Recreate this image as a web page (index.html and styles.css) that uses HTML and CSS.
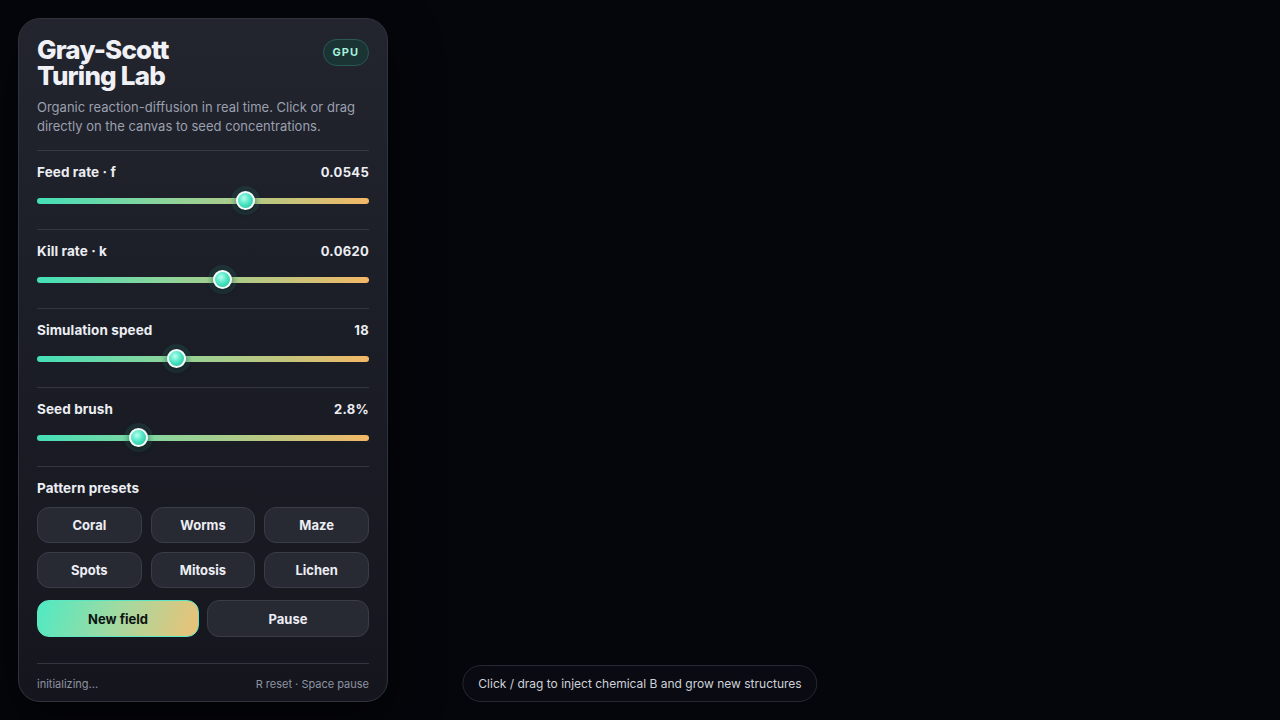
FILE: index.html
```html
<!DOCTYPE html>
<html lang="en">
<head>
  <meta charset="UTF-8">
  <meta name="viewport" content="width=device-width, initial-scale=1.0">
  <title>Gray-Scott Turing Lab</title>
  <link rel="stylesheet" href="styles.css">
</head>
<body>
  <main class="lab">
    <aside class="panel">
      <header class="panel-head">
        <h1><span>Gray-Scott</span><span>Turing Lab</span></h1>
        <span class="badge">GPU</span>
      </header>
      <p class="intro">Organic reaction-diffusion in real time. Click or drag directly on the canvas to seed concentrations.</p>

      <section class="control">
        <div class="control-row">
          <label>Feed rate · f</label>
          <span class="value">0.0545</span>
        </div>
        <div class="slider">
          <div class="track"></div>
          <div class="thumb" style="left: 62.7%"></div>
        </div>
      </section>

      <section class="control">
        <div class="control-row">
          <label>Kill rate · k</label>
          <span class="value">0.0620</span>
        </div>
        <div class="slider">
          <div class="track"></div>
          <div class="thumb" style="left: 56%"></div>
        </div>
      </section>

      <section class="control">
        <div class="control-row">
          <label>Simulation speed</label>
          <span class="value">18</span>
        </div>
        <div class="slider">
          <div class="track"></div>
          <div class="thumb" style="left: 41.9%"></div>
        </div>
      </section>

      <section class="control">
        <div class="control-row">
          <label>Seed brush</label>
          <span class="value">2.8%</span>
        </div>
        <div class="slider">
          <div class="track"></div>
          <div class="thumb" style="left: 30.7%"></div>
        </div>
      </section>

      <section class="presets">
        <h2>Pattern presets</h2>
        <div class="preset-grid">
          <button type="button" class="btn">Coral</button>
          <button type="button" class="btn">Worms</button>
          <button type="button" class="btn">Maze</button>
          <button type="button" class="btn">Spots</button>
          <button type="button" class="btn">Mitosis</button>
          <button type="button" class="btn">Lichen</button>
        </div>
        <div class="actions">
          <button type="button" class="btn btn-primary">New field</button>
          <button type="button" class="btn">Pause</button>
        </div>
      </section>

      <footer class="panel-foot">
        <span>initializing...</span>
        <span>R reset · Space pause</span>
      </footer>
    </aside>

    <div class="hint">Click / drag to inject chemical B and grow new structures</div>
  </main>
</body>
</html>
```

FILE: styles.css
```css
* {
  box-sizing: border-box;
}
html, body {
  margin: 0;
  height: 100%;
}
body {
  background: #05060b;
  color: #e9eaf0;
  font-family: Inter, "Noto Sans", sans-serif;
  overflow: hidden;
}
.lab {
  position: relative;
  height: 100vh;
  padding: 18px;
}
.panel {
  width: 370px;
  height: 100%;
  padding: 18px 18px 10px;
  display: flex;
  flex-direction: column;
  border: 1px solid #30323d;
  border-radius: 22px;
  background: linear-gradient(180deg, #22242e 0%, #1c1e27 45%, #15161d 100%);
  box-shadow: 0 20px 50px rgba(0, 0, 0, 0.6);
}
.panel-head {
  display: flex;
  justify-content: space-between;
  align-items: flex-start;
}
h1 {
  margin: 0;
  display: flex;
  flex-direction: column;
  font-size: 26px;
  font-weight: 800;
  letter-spacing: -0.8px;
  color: #f0f1f6;
}
h1 span {
  display: block;
  height: 26px;
  line-height: 26px;
}
.badge {
  margin-top: 2px;
  padding: 0 9px;
  height: 27px;
  line-height: 25px;
  border: 1px solid #2b5a52;
  border-radius: 14px;
  background: #1a3333;
  color: #a6f0dc;
  font-size: 11px;
  font-weight: 700;
  letter-spacing: 1px;
}
.intro {
  margin: 9px 0 0;
  padding-bottom: 14px;
  font-size: 13px;
  line-height: 19px;
  color: #9ba0ae;
  border-bottom: 1px solid #363844;
}
.control {
  padding: 13px 0 0;
  height: 79px;
  border-bottom: 1px solid #343641;
}
.control-row {
  display: flex;
  justify-content: space-between;
  font-size: 13px;
  line-height: 16px;
  font-weight: 700;
  color: #eceef3;
}
.control-row label {
  font-size: 13.5px;
  letter-spacing: 0.1px;
}
.value {
  letter-spacing: 0.3px;
}
.slider {
  position: relative;
  margin-top: 11px;
  height: 20px;
}
.track {
  position: absolute;
  left: 0;
  right: 0;
  top: 7px;
  height: 6px;
  border-radius: 3px;
  background: linear-gradient(90deg, #44dfb8 0%, #8fd49a 40%, #c4c47c 75%, #f3b866 100%);
}
.thumb {
  position: absolute;
  top: 0;
  width: 19px;
  height: 19px;
  margin-left: -9.5px;
  border-radius: 50%;
  border: 2px solid #f4fffb;
  background: radial-gradient(circle at 40% 35%, #b8fff0 0%, #4fe6c4 45%, #1ab596 100%);
  box-shadow: 0 0 0 5px rgba(50, 190, 160, 0.12), 0 2px 6px rgba(0, 0, 0, 0.5);
}
.presets {
  padding-top: 13px;
}
h2 {
  margin: 0 0 11px;
  font-size: 13.5px;
  line-height: 16px;
  font-weight: 700;
  letter-spacing: 0.1px;
  color: #eceef3;
}
.preset-grid {
  display: grid;
  grid-template-columns: repeat(3, 1fr);
  gap: 9px 9px;
}
.btn {
  height: 36px;
  border: 1px solid #3a3c48;
  border-radius: 12px;
  background: #272933;
  color: #eceef3;
  font-family: inherit;
  font-size: 13px;
  font-weight: 700;
  cursor: pointer;
}
.actions {
  display: grid;
  grid-template-columns: 1fr 1fr;
  gap: 8px;
  margin-top: 12px;
}
.actions .btn {
  height: 37px;
}
.btn-primary {
  border-color: #5ee6c4;
  background: linear-gradient(110deg, #4eeac3 0%, #a4d9a0 50%, #ecc176 100%);
  color: #0c1512;
}
.panel-foot {
  margin-top: auto;
  display: flex;
  justify-content: space-between;
  padding-top: 13px;
  height: 28px;
  border-top: 1px solid #33353f;
  font-size: 11px;
  line-height: 14px;
  color: #8d92a1;
}
.hint {
  position: absolute;
  left: 50%;
  bottom: 18px;
  transform: translateX(-50%);
  padding: 0 15px;
  height: 37px;
  line-height: 35px;
  border: 1px solid #262833;
  border-radius: 19px;
  background: #0a0b12;
  color: #cfd1d8;
  font-size: 12px;
  white-space: nowrap;
}
```
